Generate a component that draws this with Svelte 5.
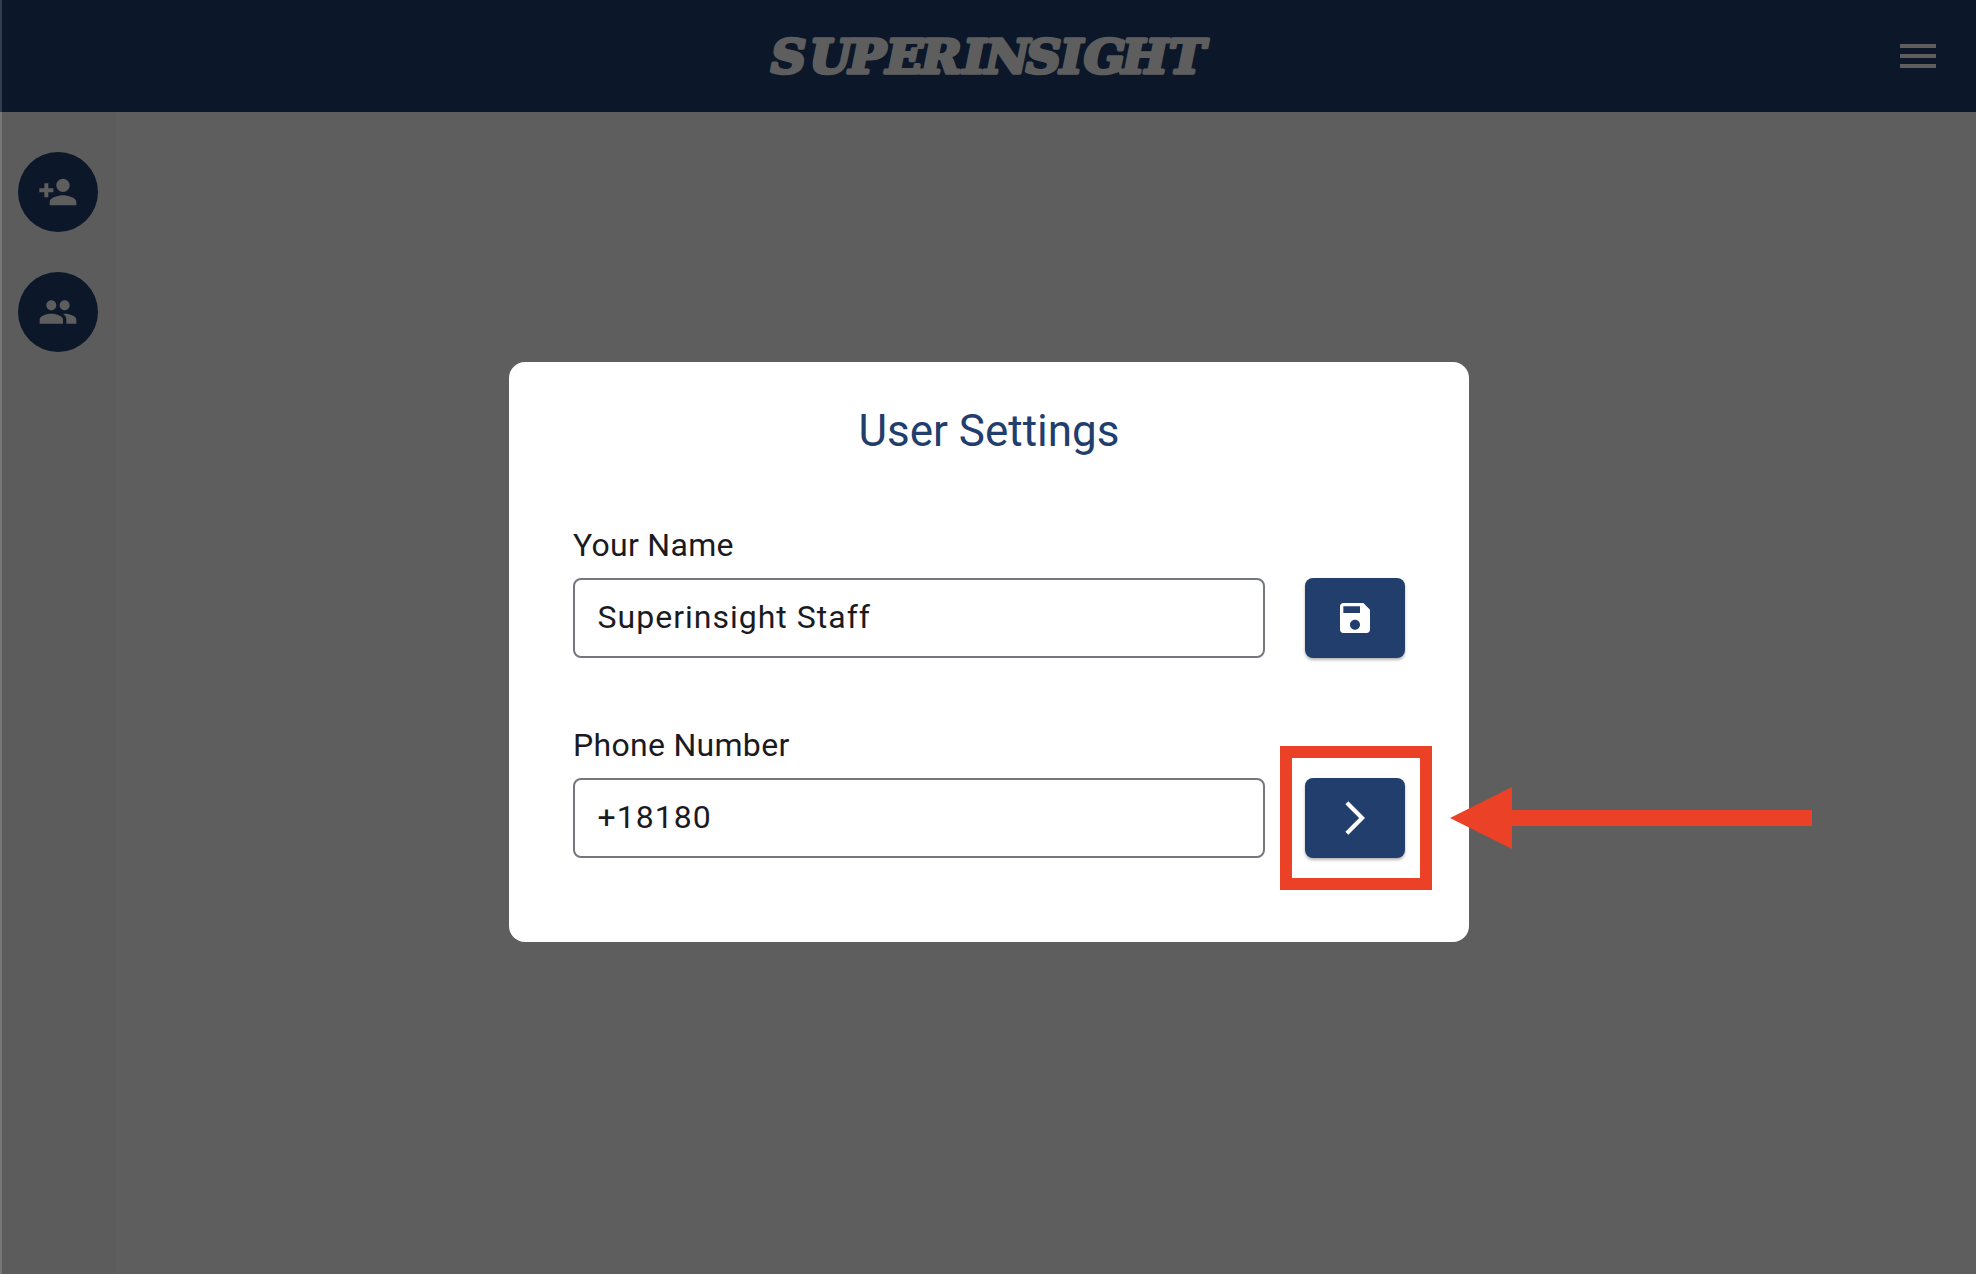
<script>
  let name = $state('Superinsight Staff');
  let phone = $state('+18180');

  // Left edge of each wordmark letter, before the horizontal stretch
  const letterX = [2.8, 39.2, 76.4, 111.3, 144.3, 184, 204.7, 243.4, 275.5, 298.1, 334, 378.3].join(' ');
</script>

<div class="app">
  <header>
    <svg class="logo" viewBox="0 0 450 60">
      <text x={letterX} y="47.4" transform="scale(1.06 1)">SUPERINSIGHT</text>
    </svg>
    <button class="menu" aria-label="Menu">
      <svg viewBox="0 0 24 24"><path d="M3 18h18v-2H3v2zm0-5h18v-2H3v2zm0-7v2h18V6H3z" /></svg>
    </button>
  </header>
  <div class="body">
    <nav>
      <button class="round" aria-label="Add person">
        <svg viewBox="0 0 24 24"><path d="M15 12c2.21 0 4-1.79 4-4s-1.79-4-4-4-4 1.79-4 4 1.79 4 4 4zm-8.8-2.2V6.8H3.8v3H.8v2.4h3v3h2.4v-3h3V9.8H6.2zM15 14c-2.67 0-8 1.34-8 4v2h16v-2c0-2.66-5.33-4-8-4z" /></svg>
      </button>
      <button class="round" aria-label="People">
        <svg viewBox="0 0 24 24"><path d="M16 11c1.66 0 2.99-1.34 2.99-3S17.66 5 16 5c-1.66 0-3 1.34-3 3s1.34 3 3 3zm-8 0c1.66 0 2.99-1.34 2.99-3S9.66 5 8 5C6.34 5 5 6.34 5 8s1.34 3 3 3zm0 2c-2.33 0-7 1.17-7 3.5V19h14v-2.5c0-2.33-4.67-3.5-7-3.5zm8 0c-.29 0-.62.02-.97.05 1.16.84 1.97 1.97 1.97 3.45V19h6v-2.5c0-2.33-4.67-3.5-7-3.5z" /></svg>
      </button>
    </nav>
    <main></main>
  </div>
  <div class="edge"></div>

  <section class="dialog">
    <h1>User Settings</h1>
    <label for="name">Your Name</label>
    <div class="row">
      <input id="name" bind:value={name} />
      <button class="action" aria-label="Save">
        <svg viewBox="0 0 24 24"><path d="M17 3H5c-1.11 0-2 .9-2 2v14c0 1.1.89 2 2 2h14c1.1 0 2-.9 2-2V7l-4-4zm-5 16c-1.66 0-3-1.34-3-3s1.34-3 3-3 3 1.34 3 3-1.34 3-3 3zm3-10H5V5h10v4z" /></svg>
      </button>
    </div>
    <label for="phone">Phone Number</label>
    <div class="row">
      <input id="phone" bind:value={phone} />
      <button class="action" aria-label="Next">
        <svg viewBox="0 0 24 24"><path d="M6.23 20.23 8 22l10-10L8 2 6.23 3.77 14.46 12z" /></svg>
      </button>
    </div>
    <div class="highlight"></div>
    <svg class="arrow" viewBox="0 0 362 62"><path d="M0 31 62 0V23H362V39H62V62z" /></svg>
  </section>
</div>

<style>
  :global(body) { margin: 0; }
  .app {
    position: relative;
    display: flex;
    flex-direction: column;
    height: 1274px;
    overflow: hidden;
    background: #5e5e5e;
    font-family: Roboto, sans-serif;
  }
  button { border: 0; padding: 0; display: grid; place-items: center; }
  svg { display: block; }
  header {
    height: 112px;
    flex: none;
    display: grid;
    grid-template-columns: 1fr 450px 1fr;
    align-items: center;
    box-sizing: border-box;
    padding: 0 34px 0 44px;
    background: #0c1829;
  }
  .logo { grid-column: 2; width: 450px; height: 60px; overflow: visible; }
  .logo text {
    font: italic bold 46px 'DejaVu Serif', serif;
    fill: #5e5e5e;
    stroke: #5e5e5e;
    stroke-width: 3.6;
    stroke-linejoin: round;
  }
  .menu { justify-self: end; background: none; }
  .menu svg { width: 48px; height: 48px; fill: #5e5e5e; }
  .body { flex: 1; display: flex; }
  nav {
    width: 116px;
    box-sizing: border-box;
    padding: 40px 0 0 18px;
    display: flex;
    flex-direction: column;
    gap: 40px;
    background: #5c5c5c;
  }
  .round { width: 80px; height: 80px; border-radius: 50%; background: #0c1829; }
  .round svg { width: 40px; height: 40px; fill: #5e5e5e; }
  main { flex: 1; }
  .edge {
    position: absolute;
    inset: 0 auto 0 0;
    width: 2px;
    background: rgba(255, 255, 255, 0.16);
  }
  .dialog {
    position: absolute;
    left: 509px;
    top: 362px;
    width: 960px;
    height: 580px;
    box-sizing: border-box;
    padding: 41px 64px 0;
    border-radius: 16px;
    background: #fff;
    color: #1b1b1f;
  }
  h1 {
    margin: 0 0 53px;
    font-size: 44px;
    line-height: 56px;
    font-weight: 380;
    text-align: center;
    color: #223e6d;
  }
  label {
    display: block;
    height: 66px;
    box-sizing: border-box;
    padding-top: 14px;
    line-height: 38px;
    font-size: 32px;
    font-weight: 370;
    letter-spacing: 0.3px;
  }
  .row { display: flex; gap: 40px; margin-bottom: 54px; }
  input {
    width: 692px;
    height: 80px;
    box-sizing: border-box;
    padding: 0 22px 2px 22.6px;
    border: 2px solid #74777f;
    border-radius: 8px;
    outline: none;
    background: #fff;
    color: #1b1b1f;
    font: 370 32px Roboto, sans-serif;
    letter-spacing: 1px;
  }
  .action {
    width: 100px;
    height: 80px;
    border-radius: 8px;
    background: #223e6d;
    box-shadow: 0 2px 3px rgba(0, 0, 0, 0.3);
  }
  .action svg { width: 40px; height: 40px; fill: #fff; }
  .highlight {
    position: absolute;
    left: 771px;
    top: 384px;
    width: 152px;
    height: 144px;
    box-sizing: border-box;
    border: 12px solid #eb4127;
  }
  .arrow {
    position: absolute;
    left: 941px;
    top: 425px;
    width: 362px;
    height: 62px;
    fill: #eb4127;
  }
</style>
